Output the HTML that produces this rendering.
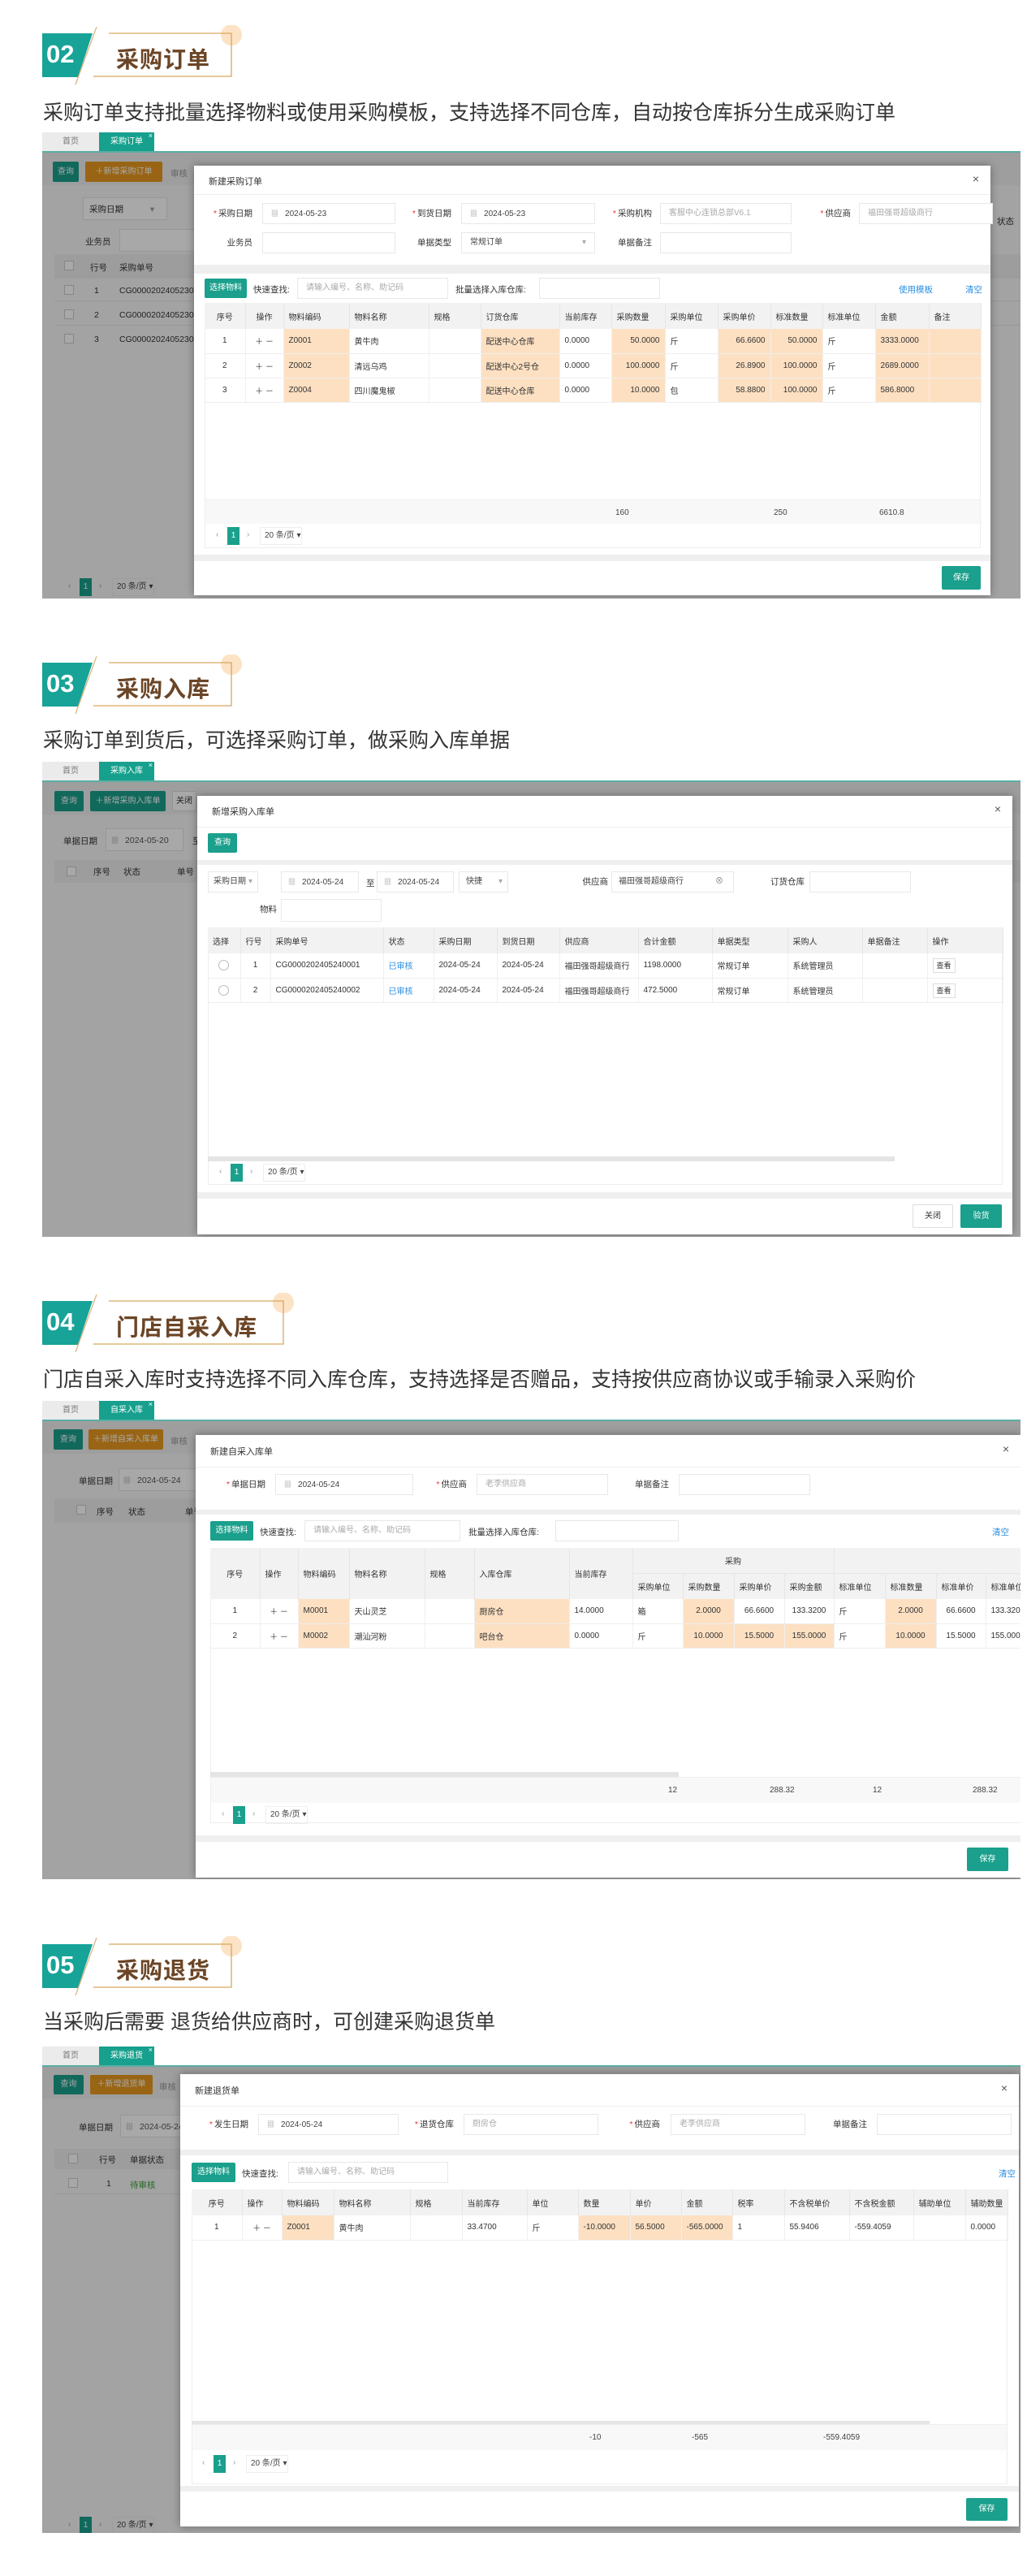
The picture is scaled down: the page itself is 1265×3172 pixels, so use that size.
<!DOCTYPE html>
<html><head><meta charset="utf-8">
<style>
*{margin:0;padding:0;box-sizing:border-box}
body{width:1265px;height:3172px;background:#fff;position:relative;overflow:hidden;font-family:"Liberation Sans","Noto Sans CJK SC",sans-serif;color:#333}
.a{position:absolute}
.ht{position:absolute;left:57px;font:bold 31px "Liberation Sans",sans-serif;color:#fff}
.hn{position:absolute;left:143px;font-weight:bold;font-size:28px;color:#6b4526;letter-spacing:1px;font-family:"Liberation Sans","Noto Sans CJK SC",sans-serif}
.desc{position:absolute;left:53px;font-size:25px;color:#333;line-height:30px;white-space:nowrap}
.shot{position:absolute;left:52px;width:1205px;overflow:hidden;background:#fff}
.t1{position:absolute;left:0;top:0;width:70px;height:23px;background:#ebebeb;color:#777;font-size:10px;line-height:23px;text-align:center}
.t2{position:absolute;left:70px;top:0;width:68px;height:23px;background:#17a08d;color:#fff;font-size:10px;line-height:23px;text-align:center}
.t2 i{position:absolute;right:2px;top:-7px;font-style:normal;font-size:9px}
.tl{position:absolute;left:0;right:0;top:23px;height:2px;background:#5aaea3}
.under{position:absolute;left:0;right:0;top:25px;bottom:0;background:#f8f8f8}
.mask{position:absolute;left:0;right:0;top:25px;bottom:0;background:rgba(0,0,0,.34)}
.d{position:absolute;background:#fff;box-shadow:0 0 10px rgba(0,0,0,.35)}
.ttl{position:absolute;left:18px;font-size:11px;color:#333}
.x{position:absolute;right:14px;font-size:14px;color:#555}
.hl{position:absolute;left:0;right:0;height:1px;background:#eee}
.band{position:absolute;left:0;right:0;background:#efefef}
.inp{position:absolute;border:1px solid #e8e8e8;height:26px;font-size:10px;line-height:24px;padding-left:10px;color:#444;white-space:nowrap;overflow:hidden;background:#fff}
.ph{color:#aaa}
.cal{color:#aaa;font-size:9px;margin-right:8px}
.lbl{position:absolute;font-size:10.5px;color:#333;text-align:right;line-height:26px;white-space:nowrap}
.lbl b{color:#e33;font-weight:normal;margin-right:2px}
.btn{position:absolute;background:#1aa08c;color:#fff;font-size:10px;text-align:center;border-radius:2px}
.ob{position:absolute;background:#e89a20;color:#fff;font-size:10px;text-align:center;border-radius:2px}
.wb{position:absolute;background:#fff;border:1px solid #ddd;color:#333;font-size:10px;text-align:center;border-radius:2px}
.lk{position:absolute;color:#2a8ee0;font-size:10.5px}
.tbox{position:absolute;border:1px solid #eee;background:#fff}
table.g{border-collapse:collapse;table-layout:fixed;font-size:10px;color:#333}
table.g th{background:#f2f2f2;font-weight:normal;text-align:left;padding-left:6px;height:32px;border-right:1px solid #e6e6e6;white-space:nowrap;overflow:hidden}
table.g td{height:30px;border-bottom:1px solid #eee;border-right:1px solid #f0f0f0;padding-left:6px;white-space:nowrap;overflow:hidden}
table.g td.c,table.g th.c{text-align:center;padding-left:0}
.o{background:#fde0c2!important}
.foot{position:absolute;background:#f8f8f8;border-top:1px solid #eee;font-size:10px;color:#444}
.foot span{position:absolute;top:10px}
.pg{position:absolute;font-size:10px;color:#999;height:22px}
.pg .p{position:absolute;left:14px;top:0;width:15px;height:22px;background:#1aa08c;color:#fff;text-align:center;line-height:22px}
.pg .l{position:absolute;left:0;top:4px}
.pg .r{position:absolute;left:38px;top:4px}
.pg .s{position:absolute;left:54px;top:0;width:52px;height:22px;border:1px solid #eee;line-height:20px;padding-left:5px;color:#444;white-space:nowrap}
.sb{position:absolute;height:6px;background:#e4e4e4}
.cb{display:inline-block;width:12px;height:12px;border:1px solid #ccc;background:#fff;vertical-align:middle}
.rd{display:inline-block;width:13px;height:13px;border:1px solid #bbb;border-radius:50%;vertical-align:middle}
.u{position:absolute;font-size:10.5px;color:#333;white-space:nowrap}
.ub{position:absolute;border:1px solid #e4e4e4;background:#fff}
</style></head><body>

<!-- ===== 02 ===== -->
<svg class="a" style="left:0;top:31px" width="380" height="75">
<polygon points="52,10 114,10 96,64 52,64" fill="#17a398"/>
<circle cx="285" cy="12" r="13" fill="#fbdcb8" opacity=".8"/>
<polyline points="134,10 285,10 285,63 115,63" fill="none" stroke="#d6a95e" stroke-width="1.3"/>
<line x1="119" y1="2" x2="93" y2="73" stroke="#d8b27a" stroke-width="1.2"/>
</svg>
<div class="ht" style="top:49px">02</div>
<div class="hn" style="top:52px">采购订单</div>
<div class="desc" style="top:124px">采购订单支持批量选择物料或使用采购模板，支持选择不同仓库，自动按仓库拆分生成采购订单</div>

<div class="shot" style="top:163px;height:574px">
<div class="t1">首页</div><div class="t2">采购订单<i>×</i></div><div class="tl"></div>
<div class="under">
 <div class="a" style="left:0;right:0;top:0;height:40px;background:#f0f0f0"></div>
 <div class="btn" style="left:13px;top:11px;width:32px;height:25px;line-height:25px">查询</div>
 <div class="ob" style="left:53px;top:11px;width:95px;height:25px;line-height:25px">＋新增采购订单</div>
 <div class="u" style="left:158px;top:18px;color:#999">审核</div>
 <div class="ub" style="left:50px;top:55px;width:104px;height:28px"></div>
 <div class="u" style="left:58px;top:62px">采购日期 <span style="color:#999;margin-left:30px">▾</span></div>
 <div class="u" style="left:53px;top:102px">业务员</div>
 <div class="ub" style="left:95px;top:94px;width:140px;height:28px"></div>
 <div class="a" style="left:15px;right:0;top:125px;height:30px;background:#eee"></div>
 <div class="u" style="left:27px;top:133px"><span class="cb"></span></div>
 <div class="u" style="left:59px;top:134px">行号</div><div class="u" style="left:95px;top:134px">采购单号</div>
 <div class="u" style="left:27px;top:163px"><span class="cb"></span></div><div class="u" style="left:64px;top:164px">1</div><div class="u" style="left:95px;top:164px">CG0000202405230</div>
 <div class="u" style="left:27px;top:193px"><span class="cb"></span></div><div class="u" style="left:64px;top:194px">2</div><div class="u" style="left:95px;top:194px">CG0000202405230</div>
 <div class="u" style="left:27px;top:223px"><span class="cb"></span></div><div class="u" style="left:64px;top:224px">3</div><div class="u" style="left:95px;top:224px">CG0000202405230</div>
 <div class="a" style="left:15px;right:0;top:152px;height:1px;background:#e5e5e5"></div>
 <div class="a" style="left:15px;right:0;top:182px;height:1px;background:#e5e5e5"></div>
 <div class="a" style="left:15px;right:0;top:212px;height:1px;background:#e5e5e5"></div>
 <div class="u" style="left:1176px;top:77px">状态</div>
 <div class="pg" style="left:32px;top:524px"><span class="l">‹</span><span class="p">1</span><span class="r">›</span><span class="s">20 条/页 ▾</span></div>
</div>
<div class="mask"></div>
<div class="d" style="left:187px;top:41px;width:981px;height:529px">
 <div class="ttl" style="top:11px">新建采购订单</div><div class="x" style="top:8px">×</div>
 <div class="hl" style="top:35px"></div>
 <div class="lbl" style="left:0;width:72px;top:46px"><b>*</b>采购日期</div>
 <div class="inp" style="left:84px;top:46px;width:164px"><span class="cal">▦</span>2024-05-23</div>
 <div class="lbl" style="left:240px;width:77px;top:46px"><b>*</b>到货日期</div>
 <div class="inp" style="left:329px;top:46px;width:165px"><span class="cal">▦</span>2024-05-23</div>
 <div class="lbl" style="left:490px;width:74px;top:46px"><b>*</b>采购机构</div>
 <div class="inp" style="left:574px;top:46px;width:162px"><span class="ph">客服中心连锁总部V6.1</span></div>
 <div class="lbl" style="left:740px;width:69px;top:46px"><b>*</b>供应商</div>
 <div class="inp" style="left:819px;top:46px;width:165px"><span class="ph">福田强哥超级商行</span></div>
 <div class="lbl" style="left:0;width:72px;top:82px">业务员</div>
 <div class="inp" style="left:84px;top:82px;width:164px"></div>
 <div class="lbl" style="left:240px;width:77px;top:82px">单据类型</div>
 <div class="inp" style="left:329px;top:82px;width:165px">常规订单<span style="position:absolute;right:10px;color:#aaa">▾</span></div>
 <div class="lbl" style="left:490px;width:74px;top:82px">单据备注</div>
 <div class="inp" style="left:574px;top:82px;width:162px"></div>
 <div class="band" style="top:122px;height:11px"></div>
 <div class="btn" style="left:13px;top:139px;width:52px;height:24px;line-height:24px">选择物料</div>
 <div class="u" style="left:73px;top:145px">快速查找:</div>
 <div class="inp" style="left:127px;top:138px;width:186px"><span class="ph">请输入编号、名称、助记码</span></div>
 <div class="u" style="left:322px;top:145px">批量选择入库仓库:</div>
 <div class="inp" style="left:425px;top:138px;width:149px"></div>
 <div class="lk" style="left:868px;top:145px">使用模板</div><div class="lk" style="left:950px;top:145px">清空</div>
 <div class="tbox" style="left:13px;top:169px;width:956px;height:302px"></div>
 <table class="g a" style="left:13px;top:169px;width:956px">
 <colgroup><col style="width:50px"><col style="width:47px"><col style="width:81px"><col style="width:98px"><col style="width:64px"><col style="width:97px"><col style="width:64px"><col style="width:66px"><col style="width:65px"><col style="width:65px"><col style="width:64px"><col style="width:65px"><col style="width:66px"><col style="width:64px"></colgroup>
 <tr><th class="c">序号</th><th class="c">操作</th><th>物料编码</th><th>物料名称</th><th>规格</th><th>订货仓库</th><th>当前库存</th><th>采购数量</th><th>采购单位</th><th>采购单价</th><th>标准数量</th><th>标准单位</th><th>金额</th><th>备注</th></tr>
 <tr><td class="c">1</td><td class="c">＋ －</td><td class="o">Z0001</td><td>黄牛肉</td><td></td><td class="o">配送中心仓库</td><td>0.0000</td><td class="o" style="text-align:right;padding-right:6px">50.0000</td><td>斤</td><td class="o" style="text-align:right;padding-right:6px">66.6600</td><td class="o" style="text-align:right;padding-right:6px">50.0000</td><td>斤</td><td class="o">3333.0000</td><td class="o"></td></tr>
 <tr><td class="c">2</td><td class="c">＋ －</td><td class="o">Z0002</td><td>清远乌鸡</td><td></td><td class="o">配送中心2号仓</td><td>0.0000</td><td class="o" style="text-align:right;padding-right:6px">100.0000</td><td>斤</td><td class="o" style="text-align:right;padding-right:6px">26.8900</td><td class="o" style="text-align:right;padding-right:6px">100.0000</td><td>斤</td><td class="o">2689.0000</td><td class="o"></td></tr>
 <tr><td class="c">3</td><td class="c">＋ －</td><td class="o">Z0004</td><td>四川魔鬼椒</td><td></td><td class="o">配送中心仓库</td><td>0.0000</td><td class="o" style="text-align:right;padding-right:6px">10.0000</td><td>包</td><td class="o" style="text-align:right;padding-right:6px">58.8800</td><td class="o" style="text-align:right;padding-right:6px">100.0000</td><td>斤</td><td class="o">586.8000</td><td class="o"></td></tr>
 </table>
 <div class="foot" style="left:14px;top:411px;width:954px;height:30px"><span style="left:505px">160</span><span style="left:700px">250</span><span style="left:830px">6610.8</span></div>
 <div class="pg" style="left:27px;top:445px"><span class="l">‹</span><span class="p">1</span><span class="r">›</span><span class="s">20 条/页 ▾</span></div>
 <div class="band" style="top:479px;height:8px"></div>
 <div class="btn" style="left:921px;top:493px;width:48px;height:29px;line-height:29px">保存</div>
</div>
</div>

<!-- ===== 03 ===== -->
<svg class="a" style="left:0;top:806px" width="380" height="75">
<polygon points="52,10 114,10 96,64 52,64" fill="#17a398"/>
<circle cx="285" cy="12" r="13" fill="#fbdcb8" opacity=".8"/>
<polyline points="134,10 285,10 285,63 115,63" fill="none" stroke="#d6a95e" stroke-width="1.3"/>
<line x1="119" y1="2" x2="93" y2="73" stroke="#d8b27a" stroke-width="1.2"/>
</svg>
<div class="ht" style="top:824px">03</div>
<div class="hn" style="top:827px">采购入库</div>
<div class="desc" style="top:897px">采购订单到货后，可选择采购订单，做采购入库单据</div>

<div class="shot" style="top:938px;height:585px">
<div class="t1">首页</div><div class="t2">采购入库<i>×</i></div><div class="tl"></div>
<div class="under">
 <div class="a" style="left:0;right:0;top:0;height:40px;background:#f0f0f0"></div>
 <div class="btn" style="left:15px;top:11px;width:36px;height:25px;line-height:25px">查询</div>
 <div class="btn" style="left:59px;top:11px;width:93px;height:25px;line-height:25px">＋新增采购入库单</div>
 <div class="wb" style="left:160px;top:11px;width:30px;height:25px;line-height:23px">关闭</div>
 <div class="u" style="left:26px;top:65px">单据日期</div>
 <div class="ub" style="left:78px;top:57px;width:96px;height:28px"></div>
 <div class="u" style="left:85px;top:65px;color:#555"><span class="cal">▦</span>2024-05-20</div>
 <div class="u" style="left:185px;top:65px">至</div>
 <div class="a" style="left:15px;right:0;top:96px;height:28px;background:#eee"></div>
 <div class="u" style="left:30px;top:104px"><span class="cb"></span></div>
 <div class="u" style="left:63px;top:103px">序号</div><div class="u" style="left:100px;top:103px">状态</div><div class="u" style="left:166px;top:103px">单号</div>
</div>
<div class="mask"></div>
<div class="d" style="left:191px;top:42px;width:1004px;height:540px">
 <div class="ttl" style="top:11px">新增采购入库单</div><div class="x" style="top:8px">×</div>
 <div class="hl" style="top:38px"></div>
 <div class="btn" style="left:13px;top:46px;width:36px;height:24px;line-height:24px">查询</div>
 <div class="band" style="top:79px;height:6px"></div>
 <div class="inp" style="left:13px;top:93px;width:62px;padding-left:6px">采购日期<span style="position:absolute;right:6px;color:#aaa">▾</span></div>
 <div class="inp" style="left:103px;top:93px;width:96px;padding-left:8px"><span class="cal">▦</span>2024-05-24</div>
 <div class="u" style="left:208px;top:100px">至</div>
 <div class="inp" style="left:221px;top:93px;width:95px;padding-left:8px"><span class="cal">▦</span>2024-05-24</div>
 <div class="inp" style="left:322px;top:93px;width:61px;padding-left:8px">快捷<span style="position:absolute;right:6px;color:#aaa">▾</span></div>
 <div class="lbl" style="left:450px;width:56px;top:93px">供应商</div>
 <div class="inp" style="left:510px;top:93px;width:151px;padding-left:8px">福田强哥超级商行<span style="position:absolute;right:12px;color:#888">⊗</span></div>
 <div class="lbl" style="left:690px;width:58px;top:93px">订货仓库</div>
 <div class="inp" style="left:754px;top:93px;width:125px"></div>
 <div class="lbl" style="left:60px;width:38px;top:127px">物料</div>
 <div class="inp" style="left:103px;top:127px;width:124px;height:28px"></div>
 <div class="tbox" style="left:13px;top:162px;width:979px;height:317px"></div>
 <table class="g a" style="left:13px;top:162px;width:979px">
 <colgroup><col style="width:40px"><col style="width:37px"><col style="width:139px"><col style="width:62px"><col style="width:78px"><col style="width:77px"><col style="width:97px"><col style="width:91px"><col style="width:93px"><col style="width:92px"><col style="width:80px"><col style="width:93px"></colgroup>
 <tr><th style="height:30px">选择</th><th>行号</th><th>采购单号</th><th>状态</th><th>采购日期</th><th>到货日期</th><th>供应商</th><th>合计金额</th><th>单据类型</th><th>采购人</th><th>单据备注</th><th>操作</th></tr>
 <tr><td class="c"><span class="rd"></span></td><td class="c">1</td><td>CG0000202405240001</td><td style="color:#2a8ee0">已审核</td><td>2024-05-24</td><td>2024-05-24</td><td>福田强哥超级商行</td><td>1198.0000</td><td>常规订单</td><td>系统管理员</td><td></td><td><span style="border:1px solid #ddd;padding:3px 4px;font-size:9px">查看</span></td></tr>
 <tr><td class="c"><span class="rd"></span></td><td class="c">2</td><td>CG0000202405240002</td><td style="color:#2a8ee0">已审核</td><td>2024-05-24</td><td>2024-05-24</td><td>福田强哥超级商行</td><td>472.5000</td><td>常规订单</td><td>系统管理员</td><td></td><td><span style="border:1px solid #ddd;padding:3px 4px;font-size:9px">查看</span></td></tr>
 </table>
 <div class="sb" style="left:13px;top:444px;width:846px"></div>
 <div class="pg" style="left:27px;top:453px"><span class="l">‹</span><span class="p">1</span><span class="r">›</span><span class="s">20 条/页 ▾</span></div>
 <div class="band" style="top:488px;height:8px"></div>
 <div class="wb" style="left:881px;top:503px;width:50px;height:29px;line-height:27px">关闭</div>
 <div class="btn" style="left:940px;top:503px;width:51px;height:29px;line-height:29px">验货</div>
</div>
</div>

<!-- ===== 04 ===== -->
<svg class="a" style="left:0;top:1592px" width="380" height="75">
<polygon points="52,10 114,10 96,64 52,64" fill="#17a398"/>
<circle cx="349" cy="12" r="13" fill="#fbdcb8" opacity=".8"/>
<polyline points="134,10 349,10 349,63 115,63" fill="none" stroke="#d6a95e" stroke-width="1.3"/>
<line x1="119" y1="2" x2="93" y2="73" stroke="#d8b27a" stroke-width="1.2"/>
</svg>
<div class="ht" style="top:1610px">04</div>
<div class="hn" style="top:1613px">门店自采入库</div>
<div class="desc" style="top:1684px">门店自采入库时支持选择不同入库仓库，支持选择是否赠品，支持按供应商协议或手输录入采购价</div>

<div class="shot" style="top:1725px;height:589px">
<div class="t1">首页</div><div class="t2">自采入库<i>×</i></div><div class="tl"></div>
<div class="under">
 <div class="a" style="left:0;right:0;top:0;height:40px;background:#f0f0f0"></div>
 <div class="btn" style="left:14px;top:10px;width:36px;height:25px;line-height:25px">查询</div>
 <div class="ob" style="left:57px;top:10px;width:92px;height:25px;line-height:25px">＋新增自采入库单</div>
 <div class="u" style="left:158px;top:17px;color:#999">审核</div>
 <div class="u" style="left:45px;top:66px">单据日期</div>
 <div class="ub" style="left:94px;top:58px;width:100px;height:28px"></div>
 <div class="u" style="left:100px;top:66px;color:#555"><span class="cal">▦</span>2024-05-24</div>
 <div class="a" style="left:15px;right:0;top:95px;height:30px;background:#eee"></div>
 <div class="u" style="left:42px;top:103px"><span class="cb"></span></div>
 <div class="u" style="left:67px;top:104px">序号</div><div class="u" style="left:106px;top:104px">状态</div><div class="u" style="left:176px;top:104px">单号</div>
</div>
<div class="mask"></div>
<div class="d" style="left:189px;top:42px;width:1016px;height:545px">
 <div class="ttl" style="top:12px">新建自采入库单</div><div class="x" style="top:9px">×</div>
 <div class="hl" style="top:39px"></div>
 <div class="lbl" style="left:10px;width:76px;top:48px"><b>*</b>单据日期</div>
 <div class="inp" style="left:98px;top:48px;width:170px"><span class="cal">▦</span>2024-05-24</div>
 <div class="lbl" style="left:270px;width:64px;top:48px"><b>*</b>供应商</div>
 <div class="inp" style="left:346px;top:48px;width:162px"><span class="ph">老李供应商</span></div>
 <div class="lbl" style="left:520px;width:63px;top:48px">单据备注</div>
 <div class="inp" style="left:595px;top:48px;width:162px"></div>
 <div class="band" style="top:92px;height:6px"></div>
 <div class="btn" style="left:18px;top:106px;width:53px;height:24px;line-height:24px">选择物料</div>
 <div class="u" style="left:79px;top:112px">快速查找:</div>
 <div class="inp" style="left:134px;top:105px;width:192px"><span class="ph">请输入编号、名称、助记码</span></div>
 <div class="u" style="left:336px;top:112px">批量选择入库仓库:</div>
 <div class="inp" style="left:443px;top:105px;width:152px"></div>
 <div class="lk" style="left:981px;top:112px">清空</div>
 <div class="tbox" style="left:18px;top:139px;width:1000px;height:339px"></div>
 <table class="g a" style="left:18px;top:139px;width:1020px">
 <colgroup><col style="width:61px"><col style="width:47px"><col style="width:63px"><col style="width:93px"><col style="width:61px"><col style="width:117px"><col style="width:78px"><col style="width:62px"><col style="width:63px"><col style="width:62px"><col style="width:61px"><col style="width:63px"><col style="width:63px"><col style="width:61px"><col style="width:65px"></colgroup>
 <tr><th class="c" rowspan="2" style="height:62px">序号</th><th rowspan="2">操作</th><th rowspan="2">物料编码</th><th rowspan="2">物料名称</th><th rowspan="2">规格</th><th rowspan="2">入库仓库</th><th rowspan="2">当前库存</th><th colspan="4" class="c" style="height:31px;border-bottom:1px solid #e6e6e6">采购</th><th colspan="4" style="height:31px;border-bottom:1px solid #e6e6e6"></th></tr>
 <tr><th style="height:31px">采购单位</th><th>采购数量</th><th>采购单价</th><th>采购金额</th><th>标准单位</th><th>标准数量</th><th>标准单价</th><th>标准单位</th></tr>
 <tr><td class="c">1</td><td class="c">＋ －</td><td class="o">M0001</td><td>天山灵芝</td><td></td><td class="o">厨房仓</td><td>14.0000</td><td>箱</td><td class="o" style="text-align:center;padding:0">2.0000</td><td style="text-align:center;padding:0">66.6600</td><td style="text-align:center;padding:0">133.3200</td><td>斤</td><td class="o" style="text-align:center;padding:0">2.0000</td><td style="text-align:center;padding:0">66.6600</td><td>133.3200</td></tr>
 <tr><td class="c">2</td><td class="c">＋ －</td><td class="o">M0002</td><td>潮汕河粉</td><td></td><td class="o">吧台仓</td><td>0.0000</td><td>斤</td><td class="o" style="text-align:center;padding:0">10.0000</td><td class="o" style="text-align:center;padding:0">15.5000</td><td class="o" style="text-align:center;padding:0">155.0000</td><td>斤</td><td class="o" style="text-align:center;padding:0">10.0000</td><td style="text-align:center;padding:0">15.5000</td><td>155.0000</td></tr>
 </table>
 <div class="sb" style="left:18px;top:415px;width:577px"></div>
 <div class="foot" style="left:19px;top:421px;width:1000px;height:32px"><span style="left:563px">12</span><span style="left:688px">288.32</span><span style="left:815px">12</span><span style="left:938px">288.32</span></div>
 <div class="pg" style="left:32px;top:457px"><span class="l">‹</span><span class="p">1</span><span class="r">›</span><span class="s">20 条/页 ▾</span></div>
 <div class="band" style="top:493px;height:8px"></div>
 <div class="btn" style="left:950px;top:508px;width:51px;height:29px;line-height:29px">保存</div>
</div>
</div>

<!-- ===== 05 ===== -->
<svg class="a" style="left:0;top:2384px" width="380" height="75">
<polygon points="52,10 114,10 96,64 52,64" fill="#17a398"/>
<circle cx="285" cy="12" r="13" fill="#fbdcb8" opacity=".8"/>
<polyline points="134,10 285,10 285,63 115,63" fill="none" stroke="#d6a95e" stroke-width="1.3"/>
<line x1="119" y1="2" x2="93" y2="73" stroke="#d8b27a" stroke-width="1.2"/>
</svg>
<div class="ht" style="top:2402px">05</div>
<div class="hn" style="top:2405px">采购退货</div>
<div class="desc" style="top:2475px">当采购后需要 退货给供应商时，可创建采购退货单</div>

<div class="shot" style="top:2520px;height:599px">
<div class="t1">首页</div><div class="t2">采购退货<i>×</i></div><div class="tl"></div>
<div class="under">
 <div class="a" style="left:0;right:0;top:0;height:40px;background:#f0f0f0"></div>
 <div class="btn" style="left:14px;top:10px;width:37px;height:24px;line-height:24px">查询</div>
 <div class="ob" style="left:59px;top:10px;width:77px;height:24px;line-height:24px">＋新增退货单</div>
 <div class="u" style="left:144px;top:17px;color:#999">审核</div>
 <div class="u" style="left:45px;top:67px">单据日期</div>
 <div class="ub" style="left:96px;top:59px;width:80px;height:28px"></div>
 <div class="u" style="left:103px;top:67px;color:#555"><span class="cal">▦</span>2024-05-24</div>
 <div class="a" style="left:15px;right:0;top:101px;height:25px;background:#eee"></div>
 <div class="u" style="left:32px;top:107px"><span class="cb"></span></div>
 <div class="u" style="left:70px;top:107px">行号</div><div class="u" style="left:108px;top:107px">单据状态</div>
 <div class="u" style="left:32px;top:137px"><span class="cb"></span></div>
 <div class="u" style="left:79px;top:138px">1</div><div class="u" style="left:108px;top:138px;color:#3aa33a">待审核</div>
 <div class="a" style="left:15px;right:0;top:156px;height:1px;background:#e5e5e5"></div>
 <div class="pg" style="left:32px;top:554px"><span class="l">‹</span><span class="p">1</span><span class="r">›</span><span class="s">20 条/页 ▾</span></div>
</div>
<div class="mask"></div>
<div class="d" style="left:170px;top:34px;width:1033px;height:557px">
 <div class="ttl" style="top:12px">新建退货单</div><div class="x" style="top:9px">×</div>
 <div class="hl" style="top:39px"></div>
 <div class="lbl" style="left:10px;width:74px;top:49px"><b>*</b>发生日期</div>
 <div class="inp" style="left:96px;top:49px;width:173px"><span class="cal">▦</span>2024-05-24</div>
 <div class="lbl" style="left:270px;width:67px;top:49px"><b>*</b>退货仓库</div>
 <div class="inp" style="left:349px;top:49px;width:166px"><span class="ph">厨房仓</span></div>
 <div class="lbl" style="left:530px;width:61px;top:49px"><b>*</b>供应商</div>
 <div class="inp" style="left:604px;top:49px;width:166px"><span class="ph">老李供应商</span></div>
 <div class="lbl" style="left:780px;width:66px;top:49px">单据备注</div>
 <div class="inp" style="left:858px;top:49px;width:166px"></div>
 <div class="band" style="top:93px;height:7px"></div>
 <div class="btn" style="left:14px;top:109px;width:54px;height:24px;line-height:24px">选择物料</div>
 <div class="u" style="left:76px;top:115px">快速查找:</div>
 <div class="inp" style="left:133px;top:108px;width:197px"><span class="ph">请输入编号、名称、助记码</span></div>
 <div class="lk" style="left:1008px;top:115px">清空</div>
 <div class="tbox" style="left:14px;top:142px;width:1005px;height:363px"></div>
 <table class="g a" style="left:14px;top:142px;width:1005px">
 <colgroup><col style="width:62px"><col style="width:49px"><col style="width:64px"><col style="width:94px"><col style="width:64px"><col style="width:80px"><col style="width:63px"><col style="width:64px"><col style="width:63px"><col style="width:63px"><col style="width:64px"><col style="width:80px"><col style="width:79px"><col style="width:64px"><col style="width:52px"></colgroup>
 <tr><th class="c">序号</th><th>操作</th><th>物料编码</th><th>物料名称</th><th>规格</th><th>当前库存</th><th>单位</th><th>数量</th><th>单价</th><th>金额</th><th>税率</th><th>不含税单价</th><th>不含税金额</th><th>辅助单位</th><th>辅助数量</th></tr>
 <tr><td class="c">1</td><td class="c">＋ －</td><td class="o">Z0001</td><td>黄牛肉</td><td></td><td>33.4700</td><td>斤</td><td class="o">-10.0000</td><td class="o">56.5000</td><td class="o">-565.0000</td><td>1</td><td>55.9406</td><td>-559.4059</td><td></td><td>0.0000</td></tr>
 </table>
 <div class="sb" style="left:14px;top:427px;width:909px"></div>
 <div class="foot" style="left:15px;top:431px;width:1003px;height:32px"><span style="left:489px">-10</span><span style="left:615px">-565</span><span style="left:777px">-559.4059</span></div>
 <div class="pg" style="left:27px;top:469px"><span class="l">‹</span><span class="p">1</span><span class="r">›</span><span class="s">20 条/页 ▾</span></div>
 <div class="band" style="top:507px;height:7px"></div>
 <div class="btn" style="left:968px;top:522px;width:51px;height:28px;line-height:28px">保存</div>
</div>
</div>

</body></html>
